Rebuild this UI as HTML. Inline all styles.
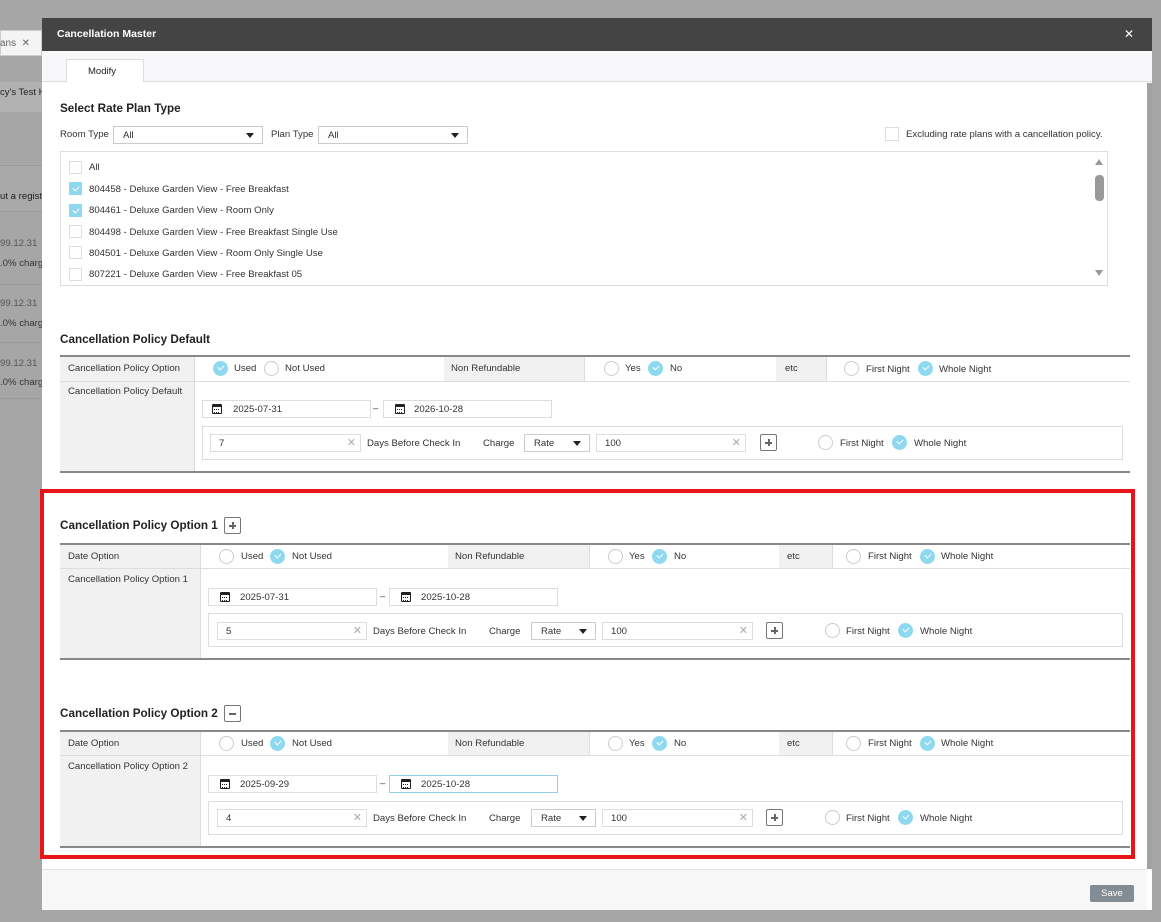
<!DOCTYPE html>
<html><head><meta charset="utf-8"><style>
*{box-sizing:border-box;margin:0;padding:0}
body{width:1161px;height:922px;background:#a6a6a6;font-family:"Liberation Sans",sans-serif;color:#333;position:relative;overflow:hidden;font-size:9.6px}
.a{position:absolute}
.t{position:absolute;height:12px;line-height:12px;white-space:nowrap}
.h{position:absolute;font-size:11.7px;font-weight:bold;color:#222;white-space:nowrap}
.in{position:absolute;border:1px solid #ddd;background:#fff;height:18px;line-height:18px;padding-left:8px;font-size:9.6px}
.x{position:absolute;right:4px;top:0;color:#aaa;font-size:11px;line-height:16px}
.sel{position:absolute;border:1px solid #ccc;background:#fff;height:18px;line-height:17px;padding-left:9px;font-size:9.6px}
.sel:after{content:"";position:absolute;right:8px;top:6px;border-left:4.5px solid transparent;border-right:4.5px solid transparent;border-top:5px solid #222}
.r{position:absolute;width:15px;height:15px;border-radius:50%;border:1px solid #ccc;background:#fff}
.rc{position:absolute;width:15px;height:15px;border-radius:50%;background:#8fd9f0}
.rc:after{content:"";position:absolute;left:4.5px;top:4px;width:5px;height:3px;border-left:1.3px solid #fff;border-bottom:1.3px solid #fff;transform:rotate(-45deg)}
.cb.c:after{content:"";position:absolute;left:3px;top:2.5px;width:5px;height:3px;border-left:1.3px solid #fff;border-bottom:1.3px solid #fff;transform:rotate(-45deg)}
.cb{position:absolute;width:13px;height:13px;border:1px solid #ddd;background:#fff}
.cb.c{background:#8fd9f0;border-color:#8fd9f0}
.cal{position:absolute;width:10px;height:10px;border:1.5px solid #222;border-top-width:3px;border-radius:1px}
.cal:after{content:"";position:absolute;left:1px;top:1.5px;width:5px;height:2px;border-top:1px dotted #222;border-bottom:1px dotted #222}
.btn{position:absolute;width:17px;height:17px;border:1px solid #777;border-radius:2px;background:#fff}
.btn:before{content:"";position:absolute;left:4px;top:7px;width:7px;height:1.5px;background:#666}
.btn.p:after{content:"";position:absolute;left:7px;top:4px;width:1.5px;height:7px;background:#666}
.gl{position:absolute;background:#888;height:2px}
.ln{position:absolute;background:#ddd}
.lab{position:absolute;background:#f1f1f1}
</style></head><body>
<div class="a" style="left:0;top:30px;width:42px;height:26px;background:#f4f4f4;border:1px solid #ccc"></div>
<div class="t" style="left:0;top:38px;color:#666;font-size:10px">ans &nbsp;✕</div>
<div class="a" style="left:0;top:82px;width:42px;height:30px;background:#b2b2b2"></div>
<div class="t" style="left:0;top:87px;font-size:9.5px;color:#222">cy's Test H</div>
<div class="a" style="left:0;top:165px;width:42px;height:47px;background:#a9a9a9;border-top:1px solid #999;border-bottom:1px solid #999"></div>
<div class="t" style="left:0;top:191px;color:#222">ut a regist</div>
<div class="t" style="left:0;top:238px;color:#555">99.12.31</div>
<div class="t" style="left:0;top:258px;color:#333">.0% charg</div>
<div class="a" style="left:0;top:284px;width:42px;height:1px;background:#999"></div>
<div class="t" style="left:0;top:298px;color:#555">99.12.31</div>
<div class="t" style="left:0;top:318px;color:#333">.0% charg</div>
<div class="a" style="left:0;top:342px;width:42px;height:1px;background:#999"></div>
<div class="t" style="left:0;top:358px;color:#555">99.12.31</div>
<div class="t" style="left:0;top:377px;color:#333">.0% charg</div>
<div class="a" style="left:0;top:398px;width:42px;height:1px;background:#999"></div>

<div class="a" style="left:42px;top:18px;width:1110px;height:892px;background:#fff"></div>
<div class="a" style="left:42px;top:18px;width:1110px;height:33px;background:#444"></div>
<div class="t" style="left:57px;top:28px;color:#fff;font-weight:bold;font-size:10.5px">Cancellation Master</div>
<div class="t" style="left:1124px;top:28px;color:#fff;font-size:12px">✕</div>
<div class="a" style="left:42px;top:51px;width:1110px;height:31px;background:#f8f7fa;border-bottom:1px solid #ddd"></div>
<div class="a" style="left:66px;top:59px;width:78px;height:23px;background:#fff;border:1px solid #ddd;border-bottom:none"></div>
<div class="t" style="left:88px;top:66px;font-size:9.5px;color:#222">Modify</div>
<div class="a" style="left:1147px;top:83px;width:5px;height:786px;background:#a3a3a3"></div>
<div class="a" style="left:42px;top:869px;width:1105px;height:41px;background:#f8f8f8;border-top:1px solid #e2e2e2"></div>
<div class="a" style="left:1090px;top:885px;width:44px;height:17px;background:#838b93;border-radius:2px;color:#fff;text-align:center;line-height:17px;font-size:9.5px">Save</div>

<div class="h" style="left:60px;top:102px">Select Rate Plan Type</div>
<div class="t" style="left:60px;top:129px">Room Type</div>
<div class="sel" style="left:113px;top:126px;width:150px">All</div>
<div class="t" style="left:271px;top:129px">Plan Type</div>
<div class="sel" style="left:318px;top:126px;width:150px">All</div>
<div class="cb" style="left:885px;top:127px;width:14px;height:14px"></div>
<div class="t" style="left:906px;top:129px">Excluding rate plans with a cancellation policy.</div>
<div class="a" style="left:60px;top:151px;width:1048px;height:135px;border:1px solid #ddd"></div>
<div class="cb" style="left:69px;top:161px"></div><div class="t" style="left:89px;top:162px">All</div>
<div class="cb c" style="left:69px;top:182px"></div><div class="t" style="left:89px;top:184px">804458 - Deluxe Garden View - Free Breakfast</div>
<div class="cb c" style="left:69px;top:204px"></div><div class="t" style="left:89px;top:205px">804461 - Deluxe Garden View - Room Only</div>
<div class="cb" style="left:69px;top:225px"></div><div class="t" style="left:89px;top:227px">804498 - Deluxe Garden View - Free Breakfast Single Use</div>
<div class="cb" style="left:69px;top:246px"></div><div class="t" style="left:89px;top:248px">804501 - Deluxe Garden View - Room Only Single Use</div>
<div class="cb" style="left:69px;top:268px"></div><div class="t" style="left:89px;top:269px">807221 - Deluxe Garden View - Free Breakfast 05</div>
<div class="a" style="left:1095px;top:159px;border-left:4.5px solid transparent;border-right:4.5px solid transparent;border-bottom:6px solid #999"></div>
<div class="a" style="left:1095px;top:175px;width:9px;height:26px;border-radius:4px;background:#999"></div>
<div class="a" style="left:1095px;top:270px;border-left:4.5px solid transparent;border-right:4.5px solid transparent;border-top:6px solid #999"></div>

<div class="h" style="left:60px;top:333px">Cancellation Policy Default</div>
<div class="lab" style="left:60px;top:357px;width:134px;height:114px"></div>
<div class="lab" style="left:444px;top:357px;width:140px;height:24px"></div>
<div class="lab" style="left:776px;top:357px;width:50px;height:24px"></div>
<div class="gl" style="left:60px;top:355px;width:1070px"></div>
<div class="ln" style="left:60px;top:381px;width:1070px;height:1px"></div>
<div class="ln" style="left:194px;top:357px;width:1px;height:114px"></div>
<div class="ln" style="left:584px;top:357px;width:1px;height:24px"></div>
<div class="ln" style="left:826px;top:357px;width:1px;height:24px"></div>
<div class="gl" style="left:60px;top:471px;width:1070px"></div>
<div class="t" style="left:68px;top:363px">Cancellation Policy Option</div>
<div class="t" style="left:68px;top:386px">Cancellation Policy Default</div>
<div class="rc" style="left:213px;top:361px"></div><div class="t" style="left:234px;top:363px">Used</div>
<div class="r" style="left:264px;top:361px"></div><div class="t" style="left:285px;top:363px">Not Used</div>
<div class="t" style="left:451px;top:363px">Non Refundable</div>
<div class="r" style="left:604px;top:361px"></div><div class="t" style="left:625px;top:363px">Yes</div>
<div class="rc" style="left:648px;top:361px"></div><div class="t" style="left:670px;top:363px">No</div>
<div class="t" style="left:785px;top:363px">etc</div>
<div class="r" style="left:844px;top:361px"></div><div class="t" style="left:866px;top:364px">First Night</div>
<div class="rc" style="left:918px;top:361px"></div><div class="t" style="left:939px;top:364px">Whole Night</div>
<div class="in" style="left:202px;top:400px;width:169px;padding-left:30px">2025-07-31</div><div class="cal" style="left:212px;top:404px"></div>
<div class="t" style="left:373px;top:403px">–</div>
<div class="in" style="left:383px;top:400px;width:169px;padding-left:30px">2026-10-28</div><div class="cal" style="left:395px;top:404px"></div>
<div class="a" style="left:202px;top:426px;width:921px;height:34px;border:1px solid #ddd"></div>
<div class="in" style="left:210px;top:434px;width:151px">7<span class="x">✕</span></div>
<div class="t" style="left:367px;top:438px">Days Before Check In</div>
<div class="t" style="left:483px;top:438px">Charge</div>
<div class="sel" style="left:524px;top:434px;width:66px">Rate</div>
<div class="in" style="left:596px;top:434px;width:150px">100<span class="x">✕</span></div>
<div class="btn p" style="left:760px;top:434px"></div>
<div class="r" style="left:818px;top:435px"></div><div class="t" style="left:840px;top:438px">First Night</div>
<div class="rc" style="left:892px;top:435px"></div><div class="t" style="left:914px;top:438px">Whole Night</div>

<div class="a" style="left:40px;top:489px;width:1095px;height:370px;border:4px solid #e8141a"></div>

<div class="h" style="left:60px;top:519px">Cancellation Policy Option 1</div>
<div class="btn p" style="left:224px;top:517px"></div>
<div class="lab" style="left:60px;top:545px;width:140px;height:113px"></div>
<div class="lab" style="left:448px;top:545px;width:141px;height:23px"></div>
<div class="lab" style="left:779px;top:545px;width:53px;height:23px"></div>
<div class="gl" style="left:60px;top:543px;width:1070px"></div>
<div class="ln" style="left:60px;top:568px;width:1070px;height:1px"></div>
<div class="ln" style="left:200px;top:545px;width:1px;height:113px"></div>
<div class="ln" style="left:589px;top:545px;width:1px;height:23px"></div>
<div class="ln" style="left:832px;top:545px;width:1px;height:23px"></div>
<div class="gl" style="left:60px;top:658px;width:1070px"></div>
<div class="t" style="left:68px;top:551px">Date Option</div>
<div class="t" style="left:68px;top:574px">Cancellation Policy Option 1</div>
<div class="r" style="left:219px;top:549px"></div><div class="t" style="left:241px;top:551px">Used</div>
<div class="rc" style="left:270px;top:549px"></div><div class="t" style="left:292px;top:551px">Not Used</div>
<div class="t" style="left:455px;top:551px">Non Refundable</div>
<div class="r" style="left:608px;top:549px"></div><div class="t" style="left:629px;top:551px">Yes</div>
<div class="rc" style="left:652px;top:549px"></div><div class="t" style="left:674px;top:551px">No</div>
<div class="t" style="left:787px;top:551px">etc</div>
<div class="r" style="left:846px;top:549px"></div><div class="t" style="left:868px;top:551px">First Night</div>
<div class="rc" style="left:920px;top:549px"></div><div class="t" style="left:941px;top:551px">Whole Night</div>
<div class="in" style="left:208px;top:588px;width:169px;padding-left:31px">2025-07-31</div><div class="cal" style="left:220px;top:592px"></div>
<div class="t" style="left:380px;top:591px">–</div>
<div class="in" style="left:389px;top:588px;width:169px;padding-left:31px">2025-10-28</div><div class="cal" style="left:401px;top:592px"></div>
<div class="a" style="left:208px;top:613px;width:915px;height:34px;border:1px solid #ddd"></div>
<div class="in" style="left:217px;top:622px;width:150px">5<span class="x">✕</span></div>
<div class="t" style="left:373px;top:626px">Days Before Check In</div>
<div class="t" style="left:489px;top:626px">Charge</div>
<div class="sel" style="left:531px;top:622px;width:65px">Rate</div>
<div class="in" style="left:602px;top:622px;width:151px">100<span class="x">✕</span></div>
<div class="btn p" style="left:766px;top:622px"></div>
<div class="r" style="left:825px;top:623px"></div><div class="t" style="left:846px;top:626px">First Night</div>
<div class="rc" style="left:898px;top:623px"></div><div class="t" style="left:920px;top:626px">Whole Night</div>

<div class="h" style="left:60px;top:707px">Cancellation Policy Option 2</div>
<div class="btn" style="left:224px;top:705px"></div>
<div class="lab" style="left:60px;top:732px;width:140px;height:114px"></div>
<div class="lab" style="left:448px;top:732px;width:141px;height:23px"></div>
<div class="lab" style="left:779px;top:732px;width:53px;height:23px"></div>
<div class="gl" style="left:60px;top:730px;width:1070px"></div>
<div class="ln" style="left:60px;top:755px;width:1070px;height:1px"></div>
<div class="ln" style="left:200px;top:732px;width:1px;height:114px"></div>
<div class="ln" style="left:589px;top:732px;width:1px;height:23px"></div>
<div class="ln" style="left:832px;top:732px;width:1px;height:23px"></div>
<div class="gl" style="left:60px;top:846px;width:1070px"></div>
<div class="t" style="left:68px;top:738px">Date Option</div>
<div class="t" style="left:68px;top:761px">Cancellation Policy Option 2</div>
<div class="r" style="left:219px;top:736px"></div><div class="t" style="left:241px;top:738px">Used</div>
<div class="rc" style="left:270px;top:736px"></div><div class="t" style="left:292px;top:738px">Not Used</div>
<div class="t" style="left:455px;top:738px">Non Refundable</div>
<div class="r" style="left:608px;top:736px"></div><div class="t" style="left:629px;top:738px">Yes</div>
<div class="rc" style="left:652px;top:736px"></div><div class="t" style="left:674px;top:738px">No</div>
<div class="t" style="left:787px;top:738px">etc</div>
<div class="r" style="left:846px;top:736px"></div><div class="t" style="left:868px;top:738px">First Night</div>
<div class="rc" style="left:920px;top:736px"></div><div class="t" style="left:941px;top:738px">Whole Night</div>
<div class="in" style="left:208px;top:775px;width:169px;padding-left:31px">2025-09-29</div><div class="cal" style="left:220px;top:779px"></div>
<div class="t" style="left:380px;top:778px">–</div>
<div class="in" style="left:389px;top:775px;width:169px;padding-left:31px;border-color:#8fd3ea">2025-10-28</div><div class="cal" style="left:401px;top:779px"></div>
<div class="a" style="left:208px;top:801px;width:915px;height:34px;border:1px solid #ddd"></div>
<div class="in" style="left:217px;top:809px;width:150px">4<span class="x">✕</span></div>
<div class="t" style="left:373px;top:813px">Days Before Check In</div>
<div class="t" style="left:489px;top:813px">Charge</div>
<div class="sel" style="left:531px;top:809px;width:65px">Rate</div>
<div class="in" style="left:602px;top:809px;width:151px">100<span class="x">✕</span></div>
<div class="btn p" style="left:766px;top:809px"></div>
<div class="r" style="left:825px;top:810px"></div><div class="t" style="left:846px;top:813px">First Night</div>
<div class="rc" style="left:898px;top:810px"></div><div class="t" style="left:920px;top:813px">Whole Night</div>
</body></html>
